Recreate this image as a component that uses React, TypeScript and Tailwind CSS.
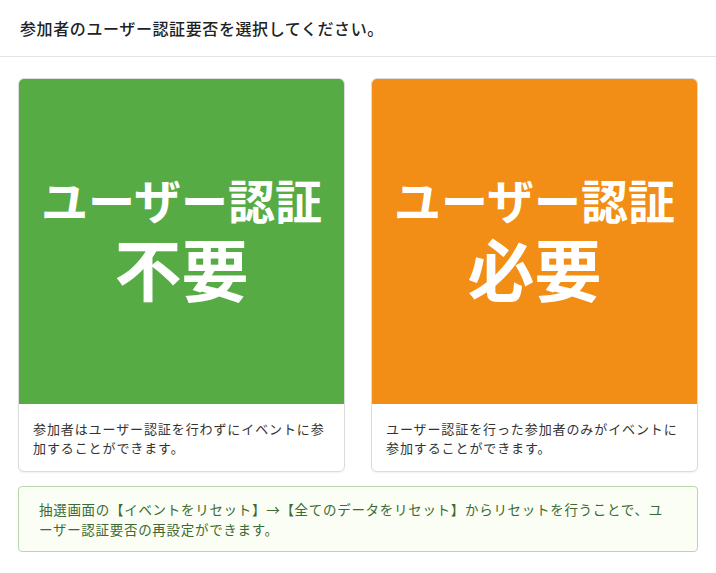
const cards = [
  {
    status: '不要',
    bg: 'bg-[#57ab44]',
    desc: '参加者はユーザー認証を行わずにイベントに参加することができます。',
  },
  {
    status: '必要',
    bg: 'bg-[#f28d15]',
    desc: 'ユーザー認証を行った参加者のみがイベントに参加することができます。',
  },
];

export default function App() {
  return (
    <div
      className="w-[716px] min-h-[573px] bg-white text-[#222]"
      style={{ fontFamily: '"Noto Sans CJK JP", "Noto Sans", sans-serif' }}
    >
      {/* header */}
      <div className="h-[57px] flex items-center px-5 border-b border-[#e3e3e3]">
        <h1 className="text-[16px] font-medium tracking-[0.6px]">
          参加者のユーザー認証要否を選択してください。
        </h1>
      </div>

      <div className="px-[18px] pt-[21px]">
        <div className="grid grid-cols-2 gap-[26px]">
          {cards.map((card) => (
            <div
              key={card.status}
              className="rounded-md border border-[#dcdcdc] overflow-hidden shadow-[0_1px_2px_rgba(0,0,0,0.06)] bg-white cursor-pointer"
            >
              <div className={`${card.bg} h-[325px] flex flex-col items-center justify-center text-white font-bold pb-[8px]`}>
                <div className="text-[47px] leading-none">ユーザー認証</div>
                <div className="text-[67px] leading-none mt-[11px]">{card.status}</div>
              </div>
              <p className="px-[14px] pt-[15px] pb-[14px] text-[13px] leading-[19px] text-[#333] tracking-[0.9px]">
                {card.desc}
              </p>
            </div>
          ))}
        </div>

        {/* notice */}
        <div className="mt-[14px] rounded-[4px] border border-[#b8d8aa] bg-[#fbfef5] px-5 py-[12px] text-[13.5px] leading-[20px] text-[#3c6a33] tracking-[0.7px]">
          抽選画面の【イベントをリセット】→【全てのデータをリセット】からリセットを行うことで、ユーザー認証要否の再設定ができます。
        </div>
      </div>
    </div>
  );
}
